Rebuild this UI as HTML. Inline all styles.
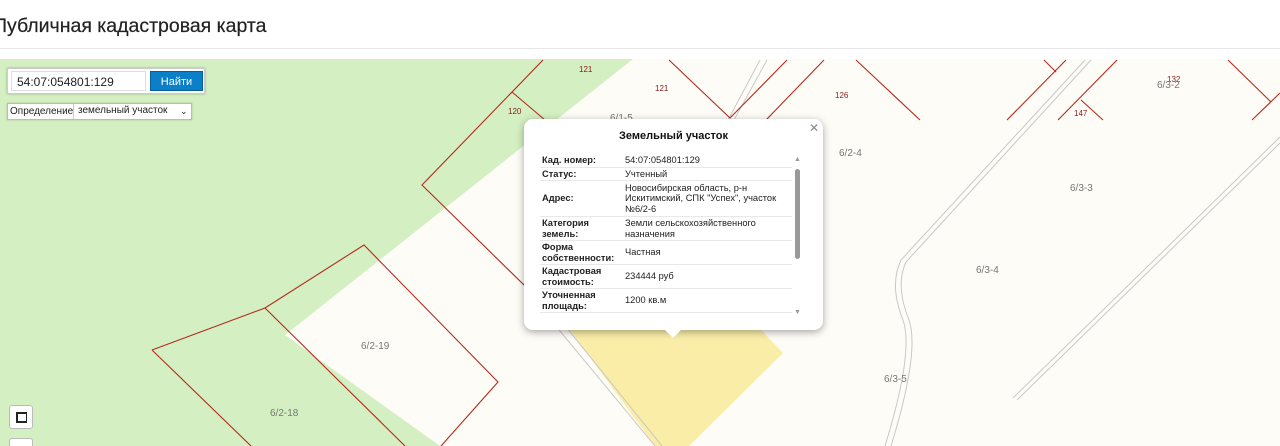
<!DOCTYPE html>
<html><head><meta charset="utf-8"><style>
*{margin:0;padding:0;box-sizing:border-box}
html,body{width:1280px;height:446px;overflow:hidden}
body{background:#fff;font-family:"Liberation Sans",sans-serif;position:relative}
.title{position:absolute;left:-7px;top:15px;font-size:19.5px;color:#222;-webkit-text-stroke:0.2px #222}
.hr{position:absolute;left:0;top:48px;width:1280px;height:1px;background:#e6e6e6}
svg{position:absolute;left:0;top:0}
.box{position:absolute;left:7px;top:68px;width:198px;height:26px;background:#fff;border:1px solid #ccc;box-shadow:0 0 2px rgba(0,0,0,.3)}
.inp{position:absolute;left:3px;top:2px;width:135px;height:20px;border:1px solid #ddd;font-size:12px;padding:3px 5px;color:#222}
.btn{position:absolute;left:142px;top:2px;width:53px;height:20px;background:#0b7fc7;color:#fff;font-size:11px;text-align:center;line-height:20px;border:1px solid #06609a}
.sel{position:absolute;left:7px;top:103px;width:185px;height:17px;background:#fff;border:1px solid #bbb;font-size:10px;color:#222;box-shadow:0 0 2px rgba(0,0,0,.2);overflow:hidden}
.sel span{position:absolute;top:2px;white-space:nowrap}
.pop{position:absolute;left:524px;top:119px;width:299px;height:211px;background:#fff;border-radius:9px;box-shadow:0 2px 8px rgba(0,0,0,.35)}
.tip{position:absolute;left:664px;top:329px;width:0;height:0;border-left:9px solid transparent;border-right:9px solid transparent;border-top:9px solid #fff;z-index:2}
.ph{position:absolute;left:0;top:11px;width:100%;text-align:center;font-weight:bold;font-size:11px;color:#111}
.x{position:absolute;left:285px;top:2px;font-size:12px;color:#888}
table{position:absolute;left:16px;top:35px;width:252px;border-collapse:collapse;font-size:9.3px;color:#222}
td{border-bottom:1px solid #e8e8e8;padding:1px 2px;line-height:10.5px;vertical-align:middle}
td:first-child{font-weight:bold;width:83px}
.sb{position:absolute;left:271px;top:50px;width:5px;height:90px;background:#999;border-radius:3px}
.ctl{position:absolute;left:9px;width:24px;height:24px;background:#fff;border:1px solid #bbb;border-radius:3px}
</style></head><body>
<div class="title">Публичная кадастровая карта</div>
<div class="hr"></div>
<svg width="1280" height="446" viewBox="0 0 1280 446">
<rect x="0" y="59" width="1280" height="387" fill="#fdfcf6"/>
<polygon points="0,59 633,59 285,335 440,446 0,446" fill="#d4efc1"/>
<polygon points="570,330 750,318 783,353 689,446 655,446" fill="#f9eda8"/>
<g fill="none" stroke="#c8c8c8" stroke-width="1">
<path d="M1085,60 L901,260 Q889,285 903,320 Q914,352 885,446"/>
<path d="M1091,60 L906,262 Q895,285 909,320 Q920,352 891,446"/>
<path d="M1280,137 L1013,398"/><path d="M1280,143 L1017,400"/>
<path d="M760,60 L728,120"/><path d="M767,60 L734,120"/>
<path d="M555,325 L655,446"/><path d="M562,322 L662,446"/>
</g>
<g fill="none" stroke="#b52a1e" stroke-width="1.1">
<path d="M152,350 L265,308 L364,245 L498,382 L441,446"/>
<path d="M265,308 L405,446"/><path d="M152,350 L251,446"/>
<path d="M543,60 L422,185 L524,285"/><path d="M512,92 L545,120"/>
<path d="M669,60 L730,118 L787,60"/>
<path d="M824,60 L766,120"/><path d="M856,60 L920,120"/>
<path d="M1044,60 L1056,72"/><path d="M1066,60 L1007,120"/>
<path d="M1117,60 L1058,120"/><path d="M1081,100 L1103,120"/>
<path d="M1228,60 L1271,102"/><path d="M1280,93 L1252,120"/>
</g>
<g font-family="Liberation Sans" font-size="8" fill="#8b1a1a">
<text x="579" y="72">121</text><text x="655" y="91">121</text><text x="508" y="114">120</text>
<text x="835" y="98">126</text><text x="1074" y="116">147</text><text x="1167" y="82">132</text>
</g>
<g font-family="Liberation Sans" font-size="10" fill="#777">
<text x="610" y="121">6/1-5</text><text x="839" y="156">6/2-4</text><text x="1070" y="191">6/3-3</text>
<text x="976" y="273">6/3-4</text><text x="884" y="382">6/3-5</text><text x="1157" y="88">6/3-2</text>
<text x="361" y="349">6/2-19</text><text x="270" y="416">6/2-18</text>
</g>
</svg>
<div class="box"><div class="inp">54:07:054801:129</div><div class="btn">Найти</div></div>
<div class="sel"><span style="left:2px">Определение:</span><span style="left:65px;top:0;height:15px;border-left:1px solid #ccc;padding:1px 4px;background:#fff">земельный участок</span><span style="left:172px;font-size:9px;background:#fff">⌄</span></div>
<div class="tip"></div>
<div class="pop"><div class="ph">Земельный участок</div><div class="x">✕</div>
<table>
<tr><td>Кад. номер:</td><td>54:07:054801:129</td></tr>
<tr><td>Статус:</td><td>Учтенный</td></tr>
<tr><td style="height:36px">Адрес:</td><td>Новосибирская область, р-н Искитимский, СПК "Успех", участок №6/2-6</td></tr>
<tr><td>Категория земель:</td><td>Земли сельскохозяйственного назначения</td></tr>
<tr><td>Форма собственности:</td><td>Частная</td></tr>
<tr><td>Кадастровая стоимость:</td><td>234444 руб</td></tr>
<tr><td>Уточненная площадь:</td><td>1200 кв.м</td></tr>
</table>
<div style="position:absolute;left:270px;top:37px;font-size:7px;color:#999">▲</div>
<div class="sb"></div>
<div style="position:absolute;left:270px;top:190px;font-size:7px;color:#999">▼</div>
</div>
<div class="ctl" style="top:405px"><div style="position:absolute;left:6px;top:6px;width:11px;height:11px;border:2px solid #222;border-right-width:1px"></div></div>
<div class="ctl" style="top:438px"></div>
</body></html>
